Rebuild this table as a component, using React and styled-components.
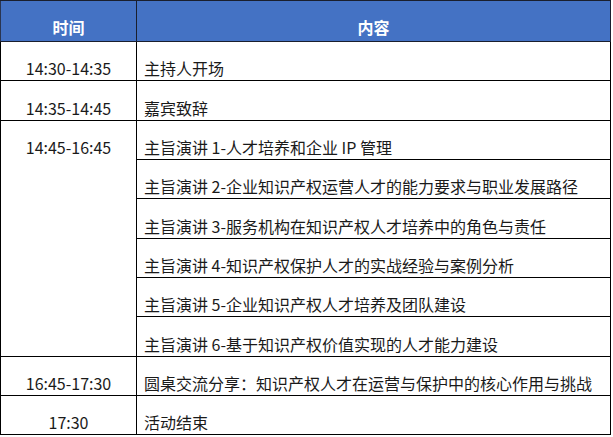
import styled, { createGlobalStyle } from "styled-components";

const GlobalStyle = createGlobalStyle`
    html, body {
        margin: 0;
        padding: 0;
        background: #fff;
    }
    body {
        font-family: "Noto Sans CJK SC", "Noto Sans", sans-serif;
    }
`;

// data
const schedule = [
    { time: "14:30-14:35", items: ["主持人开场"], heights: [39] },
    { time: "14:35-14:45", items: ["嘉宾致辞"], heights: [40] },
    {
        time: "14:45-16:45",
        items: [
            "主旨演讲 1-人才培养和企业 IP 管理",
            "主旨演讲 2-企业知识产权运营人才的能力要求与职业发展路径",
            "主旨演讲 3-服务机构在知识产权人才培养中的角色与责任",
            "主旨演讲 4-知识产权保护人才的实战经验与案例分析",
            "主旨演讲 5-企业知识产权人才培养及团队建设",
            "主旨演讲 6-基于知识产权价值实现的人才能力建设",
        ],
        heights: [39, 39, 40, 39, 39, 40],
    },
    { time: "16:45-17:30", items: ["圆桌交流分享：知识产权人才在运营与保护中的核心作用与挑战"], heights: [39] },
    { time: "17:30", items: ["活动结束"], heights: [39] },
];

// styles
const Table = styled.table`
    border-collapse: collapse;
    width: 611px;
    table-layout: fixed;
    color: #1a1a1a;
    font-size: 16px;
    line-height: 20px;
`;

const HeadCell = styled.th`
    height: 41px;
    padding: 0 0 4px;
    box-sizing: border-box;
    background: #4472c4;
    color: #fff;
    font-weight: bold;
    text-align: center;
    vertical-align: bottom;
    border: 1px solid #1a1f2e;
    border-left-color: #2a3550;
`;

const Row = styled.tr`
    height: ${(p) => p.$height}px;
`;

const TimeCell = styled.td`
    width: 136px;
    padding: ${(p) => (p.$merged ? "16px 0 0" : "0 0 2px")};
    text-align: center;
    vertical-align: ${(p) => (p.$merged ? "top" : "bottom")};
    border: 1px solid #000;
`;

const ContentCell = styled.td`
    padding: 0 4px 2px 7px;
    text-align: left;
    vertical-align: bottom;
    white-space: nowrap;
    border: 1px solid #000;
`;

// component
const App = () => {
    return (
        <>
            <GlobalStyle />
            <Table>
                <colgroup>
                    <col style={{ width: 136 }} />
                    <col />
                </colgroup>
                <thead>
                    <tr>
                        <HeadCell>时间</HeadCell>
                        <HeadCell>内容</HeadCell>
                    </tr>
                </thead>
                <tbody>
                    {schedule.map((slot) =>
                        slot.items.map((item, i) => (
                            <Row key={item} $height={slot.heights[i]}>
                                {i === 0 && (
                                    <TimeCell
                                        rowSpan={slot.items.length}
                                        $merged={slot.items.length > 1}
                                    >
                                        {slot.time}
                                    </TimeCell>
                                )}
                                <ContentCell>{item}</ContentCell>
                            </Row>
                        ))
                    )}
                </tbody>
            </Table>
        </>
    );
};

export default App;
